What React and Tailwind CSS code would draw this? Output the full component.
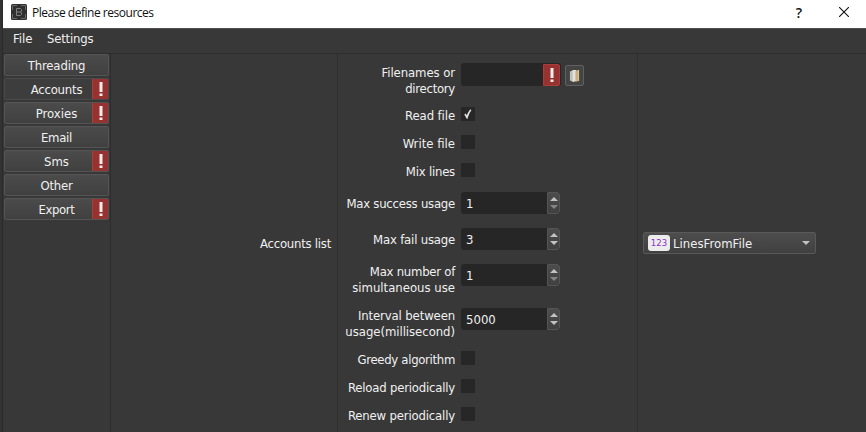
const tabs = [
  { name: "Threading", tracking: "tracking-[-0.15px]" },
  { name: "Accounts", alert: true, active: true, tracking: "tracking-[-0.2px]" },
  { name: "Proxies", alert: true, tracking: "" },
  { name: "Email", tracking: "tracking-[-0.3px]" },
  { name: "Sms", alert: true, tracking: "" },
  { name: "Other", tracking: "tracking-[-0.2px]" },
  { name: "Export", alert: true, tracking: "tracking-[-0.4px]" },
];

const rows = [
  { label: [["Filenames or", "tracking-[-0.08px]"], ["directory", "tracking-[-0.28px]"]], kind: "file", row: "mt-0" },
  { label: [["Read file", "tracking-[-0.1px]"]], kind: "check", checked: true, row: "mt-[11px]" },
  { label: [["Write file", ""]], kind: "check", row: "mt-3" },
  { label: [["Mix lines", "tracking-[-0.22px]"]], kind: "check", row: "mt-3" },
  { label: [["Max success usage", "tracking-[-0.24px]"]], kind: "spin", value: "1", atMin: true, row: "mt-4", control: "-mt-[3px]" },
  { label: [["Max fail usage", "tracking-[-0.2px]"]], kind: "spin", value: "3", row: "mt-5", control: "-mt-[3px]" },
  { label: [["Max number of", "tracking-[-0.26px]"], ["simultaneous use", ""]], kind: "spin", value: "1", atMin: true, row: "mt-4", control: "mt-px" },
  { label: [["Interval between", "tracking-[-0.13px]"], ["usage(millisecond)", "tracking-[-0.05px]"]], kind: "spin", value: "5000", row: "mt-3", control: "mt-px" },
  { label: [["Greedy algorithm", "tracking-[-0.31px]"]], kind: "check", row: "mt-3" },
  { label: [["Reload periodically", "tracking-[-0.21px]"]], kind: "check", row: "mt-3" },
  { label: [["Renew periodically", "tracking-[-0.17px]"]], kind: "check", row: "mt-3" },
];

function Alert({ className = "" }) {
  return (
    <span className={`flex w-[17px] shrink-0 items-center justify-center rounded-r-[2px] border border-[#a83d3b] bg-[#963230] ${className}`}>
      <svg width="4" height="14" viewBox="0 0 4 14" fill="#f5eded">
        <path d="M.5 0h3v10h-3zM.5 11.5h3V14h-3z" />
      </svg>
    </span>
  );
}

function Tab({ name, alert, active, tracking }) {
  const face = active ? "border-[#4a4a4a] bg-[#3d3d3d]" : "border-[#545454] bg-linear-to-b from-[#4b4b4b] to-[#404040]";
  return (
    <button className={`flex h-[22px] w-[105px] overflow-hidden rounded-[2px] border ${face}`}>
      <span className={`h-5 flex-1 text-center leading-[21px] ${alert ? "pl-4" : ""} ${tracking}`}>{name}</span>
      {alert && <Alert className="-my-px -mr-px h-[22px]" />}
    </button>
  );
}

function Spin({ value, atMin }) {
  return (
    <div className="flex h-[22px] w-[99px] rounded-[3px] bg-[#262626]">
      <span className="flex-1 pl-[5px] leading-[23px]">{value}</span>
      <span className="flex w-[13px] flex-col items-center justify-between rounded-r-[3px] border border-[#545454] bg-linear-to-b from-[#4c4c4c] to-[#404040] py-[4px]">
        <svg width="8" height="4" viewBox="0 0 8 4" className="shrink-0" fill="#c2c2c2"><path d="M0 4 4 0l4 4z" /></svg>
        <svg width="8" height="4" viewBox="0 0 8 4" className="shrink-0" fill={atMin ? "#858585" : "#c2c2c2"}><path d="M0 0h8L4 4z" /></svg>
      </span>
    </div>
  );
}

function FileField() {
  return (
    <div className="-mt-px flex">
      <div className="flex h-[23px] w-[100px] rounded-[3px] bg-[#262626]">
        <span className="flex-1" />
        <Alert className="mr-px mt-px h-[22px]" />
      </div>
      <button className="ml-1 mt-[2px] flex h-[21px] w-[19px] items-center justify-center rounded-[2px] border border-[#606060] bg-[#444]">
        <svg width="11" height="14" viewBox="0 0 12 14" preserveAspectRatio="none">
          <path d="M1 2.5 5 1v12l-4-1.5z" fill="#bfc0bd" />
          <path d="M4 1h4v11l-4 1z" fill="#e4e2da" />
          <path d="m7 2 3-1v11l-3 1z" fill="#c9b07a" />
          <path d="M10 1h1v11h-1z" fill="#efdda9" />
        </svg>
      </button>
    </div>
  );
}

function Check({ checked }) {
  return (
    <div className="flex h-[14px] w-[14px] items-center justify-center bg-[#272727]">
      {checked && (
        <svg width="8" height="10" viewBox="0 0 8 10" fill="none" stroke="#e2e2e2" strokeWidth="1.6">
          <path d="M1 5 3 8.5C4 5.2 5 2.8 6.8.8" />
        </svg>
      )}
    </div>
  );
}

export default function App() {
  return (
    <div className="flex h-[432px] w-[866px] overflow-hidden bg-[#383838] font-['DejaVu_Sans_Condensed','DejaVu_Sans',sans-serif] text-[13px] text-[#f0f0f0] [font-stretch:condensed]">
      <div className="w-[3px] shrink-0 border-r border-[#2b2b2b] bg-[#333]" />
      <div className="flex min-w-0 flex-1 flex-col">
        <header className="flex h-7 shrink-0 items-center bg-white pl-2 font-['Open_Sans','Noto_Sans',sans-serif] text-[12px] text-[#111] [font-stretch:normal]">
          <svg width="16" height="16" viewBox="0 0 16 16" className="-mt-1 shrink-0">
            <rect width="16" height="16" rx="1.5" fill="#303030" />
            <path d="M6 1.5H1.5V6m0 4v4.5H6m4 0h4.5V10m0-4V1.5H10" fill="none" stroke="#686868" />
            <path d="M5.5 4.5h4l1 1v1.5l-1 1 1 1v1.5l-1 1h-4zm0 3.5h4" fill="none" stroke="#808080" />
          </svg>
          <span className="-mt-[3px] ml-[5px] flex-1 tracking-[-0.48px]">Please define resources</span>
          <span className="-mt-1 w-[10px] text-center text-[14px] font-semibold">?</span>
          <svg width="10" height="10" viewBox="0 0 10 10" className="-mt-1 mr-[17px] ml-[35px]" stroke="#111" strokeWidth="1.1">
            <path d="m0 0 10 10M10 0 0 10" />
          </svg>
        </header>
        <nav className="flex h-[26px] shrink-0 border-t border-b border-t-[#505050] border-b-[#2e2e2e] pl-[10px] leading-5">
          <span className="w-[34px]">File</span>
          <span className="tracking-[-0.2px]">Settings</span>
        </nav>
        <main className="flex min-h-0 flex-1">
          <aside className="flex w-[108px] shrink-0 flex-col gap-[2px] border-r border-[#2d2d2d] pl-px">
            {tabs.map((tab) => (
              <Tab key={tab.name} {...tab} />
            ))}
          </aside>
          <section className="flex w-[227px] shrink-0 items-center justify-end border-r border-[#2f2f2f] pt-[2px] pr-[6px] leading-4 tracking-[-0.25px]">
            Accounts list
          </section>
          <section className="w-[300px] shrink-0 border-r border-[#2f2f2f] pt-[10px]">
            {rows.map(({ label, kind, checked, value, atMin, row, control = "" }) => (
              <div key={label[0][0]} className={`flex items-start ${row}`}>
                <div className="-mb-px w-[117px] shrink-0 pt-px text-right leading-4">
                  {label.map(([line, tracking]) => (
                    <div key={line} className={`whitespace-nowrap ${tracking}`}>{line}</div>
                  ))}
                </div>
                <div className={`ml-[6px] h-0 ${control}`}>
                  {kind === "file" && <FileField />}
                  {kind === "check" && <Check checked={checked} />}
                  {kind === "spin" && <Spin value={value} atMin={atMin} />}
                </div>
              </div>
            ))}
          </section>
          <section className="flex flex-1 items-center pl-[5px]">
            <div className="flex h-[22px] w-[173px] items-center rounded-[2px] border border-[#595959] bg-linear-to-b from-[#4d4d4d] to-[#404040] pl-1">
              <span className="flex h-4 w-[22px] items-center justify-center rounded-[3px] bg-[#ececec] text-[9.5px] text-[#8b32c8]">123</span>
              <span className="ml-[3px] flex-1 pt-px leading-5 tracking-[0.03px]">LinesFromFile</span>
              <svg width="8" height="4" viewBox="0 0 8 4" className="mr-[5px]" fill="#c2c2c2"><path d="M0 0h8L4 4z" /></svg>
            </div>
          </section>
        </main>
      </div>
    </div>
  );
}
